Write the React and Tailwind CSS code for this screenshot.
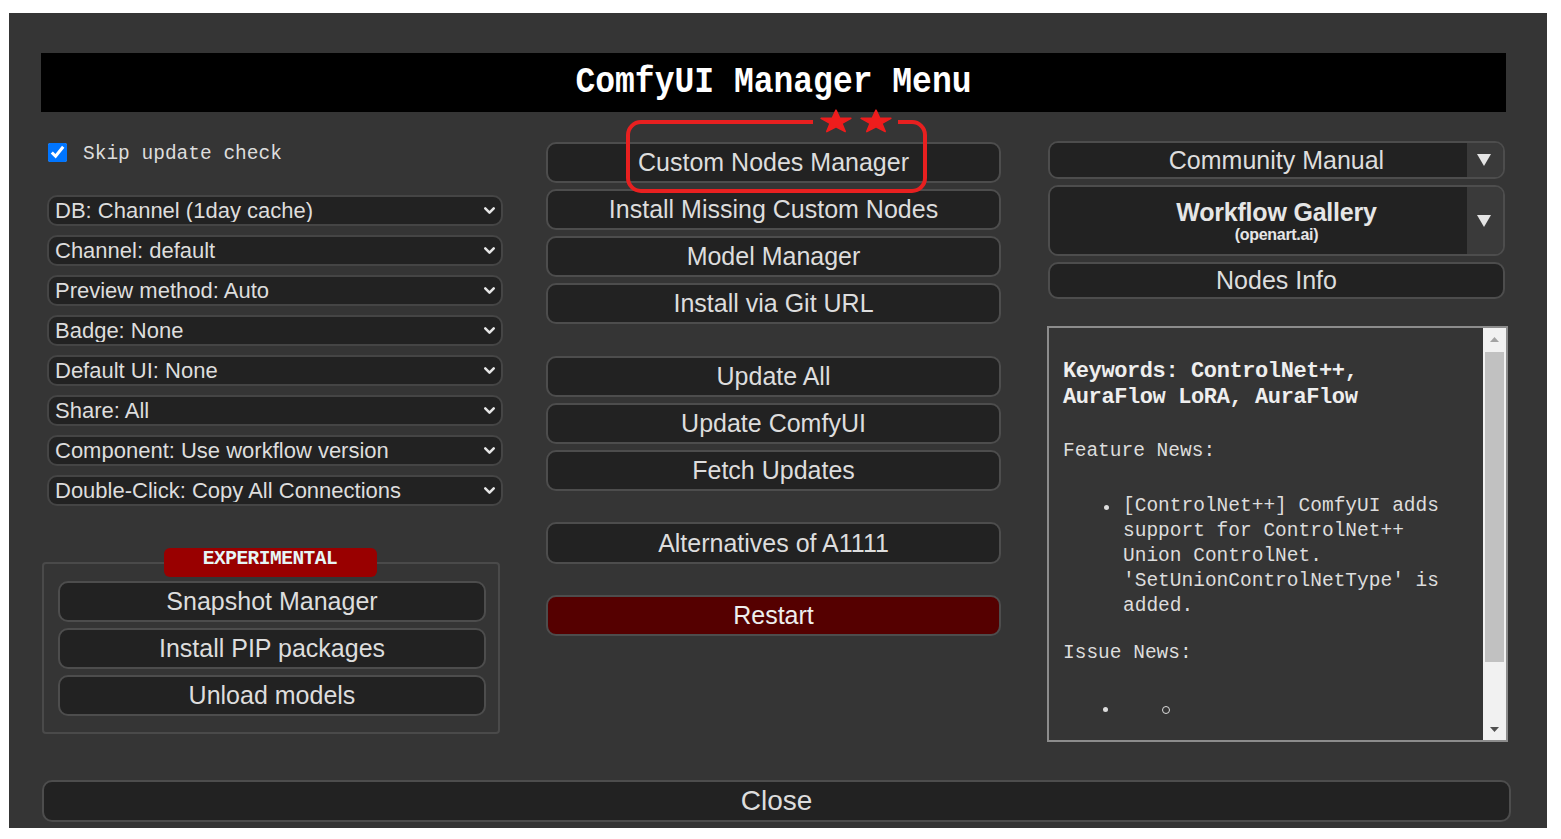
import { ChevronDown } from "lucide-react";

const settings = [
  "DB: Channel (1day cache)",
  "Channel: default",
  "Preview method: Auto",
  "Badge: None",
  "Default UI: None",
  "Share: All",
  "Component: Use workflow version",
  "Double-Click: Copy All Connections",
];

const heights = {
  sm: "h-[37px]",
  md: "h-[41px]",
  lg: "h-[42px]",
};

function Btn({ children, danger = false, size = "md", className = "" }) {
  const tone = danger ? "bg-[#550000] text-[#eee]" : "bg-[#222] text-[#ddd]";
  return (
    <button
      className={`w-full ${heights[size]} shrink-0 rounded-[10px] border-2 border-[#4d4d4d] ${tone} text-[25px] leading-none font-['Liberation_Sans',Arial,sans-serif] ${className}`}
    >
      {children}
    </button>
  );
}

function Caret() {
  return (
    <svg width="14" height="12" viewBox="0 0 14 12">
      <polygon points="0,0 14,0 7,12" fill="#e4e4e4" />
    </svg>
  );
}

function Star({ x }) {
  // squashed five point star, centred on x
  const pts = [
    [0, -14], [3.29, -4.53], [13.31, -4.33], [5.33, 1.73], [8.23, 11.33],
    [0, 5.6], [-8.23, 11.33], [-5.33, 1.73], [-13.31, -4.33], [-3.29, -4.53],
  ]
    .map(([a, b]) => `${(x + a * 1.12).toFixed(2)},${(15 + b * 0.85).toFixed(2)}`)
    .join(" ");
  return <polygon points={pts} fill="#ee1d1d" stroke="#ee1d1d" strokeWidth="1.5" strokeLinejoin="round" />;
}

export default function App() {
  return (
    <div className="min-h-screen bg-white pt-[13px] pl-[9px]">
      <div className="w-[1538px] h-[815px] bg-[#353535] pt-[40px] flex flex-col font-['Liberation_Sans',Arial,sans-serif]">
        {/* Title */}
        <div className="ml-[32px] w-[1465px] h-[59px] bg-black flex items-center justify-center">
          <h1 className="text-white text-[33px] font-bold font-['Liberation_Mono','DejaVu_Sans_Mono',monospace] scale-y-110">
            ComfyUI Manager Menu
          </h1>
        </div>

        <div className="mt-[29px] ml-[32px] flex items-start">
          {/* Left column */}
          <div className="w-[462px] flex flex-col">
            <label className="ml-[7px] mt-[1px] h-[21px] flex items-center">
              <input type="checkbox" defaultChecked className="w-[19px] h-[19px] m-0 accent-[#0075ff]" />
              <span className="ml-[16px] mt-[4px] text-[19.5px] text-[#ddd] font-['Liberation_Mono','DejaVu_Sans_Mono',monospace]">
                Skip update check
              </span>
            </label>

            <div className="mt-[32px] ml-[6px] w-[456px] flex flex-col gap-[9px]">
              {settings.map((s) => (
                <div key={s} className="relative h-[31px]">
                  <select
                    defaultValue={s}
                    className="appearance-none w-full h-full rounded-[10px] border-2 border-[#454545] bg-[#222] text-[#ddd] text-[22px] leading-none pl-[6px] pr-[30px] outline-none"
                  >
                    <option>{s}</option>
                  </select>
                  <ChevronDown
                    size={17}
                    strokeWidth={3.6}
                    color="#e6e6e6"
                    className="absolute right-[5px] top-[7px] pointer-events-none"
                  />
                </div>
              ))}
            </div>

            <div className="mt-[56px] ml-[1px] w-[458px] border-2 border-[#4a4a4a] rounded-[4px] pl-[14px] pr-[12px] pb-[16px] flex flex-col">
              <div className="-mt-[16px] self-center -translate-x-[2px] w-[213px] h-[29px] rounded-[6px] bg-[#990000] flex justify-center pt-[1px]">
                <span className="text-[19.5px] leading-[20px] font-bold text-[#e6f6f6] font-['Liberation_Mono','DejaVu_Sans_Mono',monospace] tracking-[-0.5px]">
                  EXPERIMENTAL
                </span>
              </div>
              <div className="mt-[4px] flex flex-col gap-[6px]">
                <Btn>Snapshot Manager</Btn>
                <Btn>Install PIP packages</Btn>
                <Btn>Unload models</Btn>
              </div>
            </div>
          </div>

          {/* Middle column */}
          <div className="relative ml-[43px] w-[455px] mt-[1px] flex flex-col">
            <div className="flex flex-col gap-[6px]">
              <Btn>Custom Nodes Manager</Btn>
              <Btn>Install Missing Custom Nodes</Btn>
              <Btn>Model Manager</Btn>
              <Btn>Install via Git URL</Btn>
            </div>
            <div className="mt-[32px] flex flex-col gap-[6px]">
              <Btn>Update All</Btn>
              <Btn>Update ComfyUI</Btn>
              <Btn>Fetch Updates</Btn>
            </div>
            <Btn size="lg" className="mt-[31px]">Alternatives of A1111</Btn>
            <Btn danger className="mt-[31px]">Restart</Btn>

            {/* red highlight annotation */}
            <svg
              className="absolute left-[79px] top-[-35px] pointer-events-none"
              width="303"
              height="88"
              viewBox="0 0 303 88"
            >
              <path
                d="M188 15 H16 A13 13 0 0 0 3 28 V71 A13 13 0 0 0 16 84 H287 A13 13 0 0 0 300 71 V28 A13 13 0 0 0 287 15 H273"
                fill="none"
                stroke="#e82020"
                strokeWidth="4"
              />
              <Star x={211} />
              <Star x={251} />
            </svg>
          </div>

          {/* Right column */}
          <div className="ml-[47px] w-[457px] flex flex-col">
            <div className="h-[38px] flex rounded-[10px] border-2 border-[#4d4d4d] overflow-hidden">
              <button className="flex-1 pl-[36px] bg-[#222] text-[#ddd] text-[25px] leading-none">Community Manual</button>
              <div className="w-[36px] bg-[#3a3a3a] flex items-center justify-center pr-[2px]">
                <Caret />
              </div>
            </div>
            <div className="mt-[6px] h-[71px] flex rounded-[10px] border-2 border-[#4d4d4d] overflow-hidden">
              <button className="flex-1 pl-[36px] bg-[#222] text-[#e6e6e6] flex flex-col items-center justify-center">
                <span className="text-[25px] font-bold leading-[28px] tracking-[-0.2px]">Workflow Gallery</span>
                <span className="text-[16px] font-bold leading-[18px] tracking-[-0.3px]">(openart.ai)</span>
              </button>
              <div className="w-[36px] bg-[#3a3a3a] flex items-center justify-center pr-[2px]">
                <Caret />
              </div>
            </div>
            <Btn size="sm" className="mt-[6px]">Nodes Info</Btn>

            {/* News */}
            <div className="mt-[27px] -ml-[1px] w-[461px] h-[416px] border-2 border-[#8c8c8c] flex">
              <div className="flex-1 pl-[14px] pt-[31px] text-[19.5px] text-[#ddd] font-['Liberation_Mono','DejaVu_Sans_Mono',monospace]">
                <p className="font-bold text-[22px] leading-[26px] text-[#eee] tracking-[-0.4px]">
                  Keywords: ControlNet++,
                  <br />
                  AuraFlow LoRA, AuraFlow
                </p>
                <p className="mt-[28px] leading-[25px]">Feature News:</p>
                <div className="mt-[30px] flex leading-[25px]">
                  <span className="w-[60px] flex justify-end pr-[14px] pt-[11px]">
                    <span className="w-[5px] h-[5px] rounded-full bg-[#ddd]" />
                  </span>
                  <span className="w-[335px]">
                    [ControlNet++] ComfyUI adds support for ControlNet++ Union ControlNet. 'SetUnionControlNetType' is added.
                  </span>
                </div>
                <p className="mt-[22px] leading-[25px]">Issue News:</p>
                <div className="mt-[31px] h-[25px] flex items-center">
                  <span className="ml-[40px] w-[5px] h-[5px] rounded-full bg-[#ddd]" />
                  <span className="ml-[54px] w-[8px] h-[8px] rounded-full border-[1.5px] border-[#ddd]" />
                </div>
              </div>
              <div className="w-[23px] bg-[#f1f1f1] flex flex-col items-center">
                <div className="h-[22px] flex items-center justify-center">
                  <svg width="9" height="5" viewBox="0 0 9 5">
                    <polygon points="0,5 9,5 4.5,0" fill="#a3a3a3" />
                  </svg>
                </div>
                <div className="mt-[2px] w-[19px] h-[310px] bg-[#c1c1c1]" />
                <div className="mt-auto h-[22px] flex items-center justify-center">
                  <svg width="9" height="5" viewBox="0 0 9 5">
                    <polygon points="0,0 9,0 4.5,5" fill="#505050" />
                  </svg>
                </div>
              </div>
            </div>
          </div>
        </div>

        {/* Close */}
        <button className="mt-[38px] ml-[33px] w-[1469px] h-[42px] rounded-[10px] border-2 border-[#4d4d4d] bg-[#222] text-[#ddd] text-[28px] leading-none">
          Close
        </button>
      </div>
    </div>
  );
}
